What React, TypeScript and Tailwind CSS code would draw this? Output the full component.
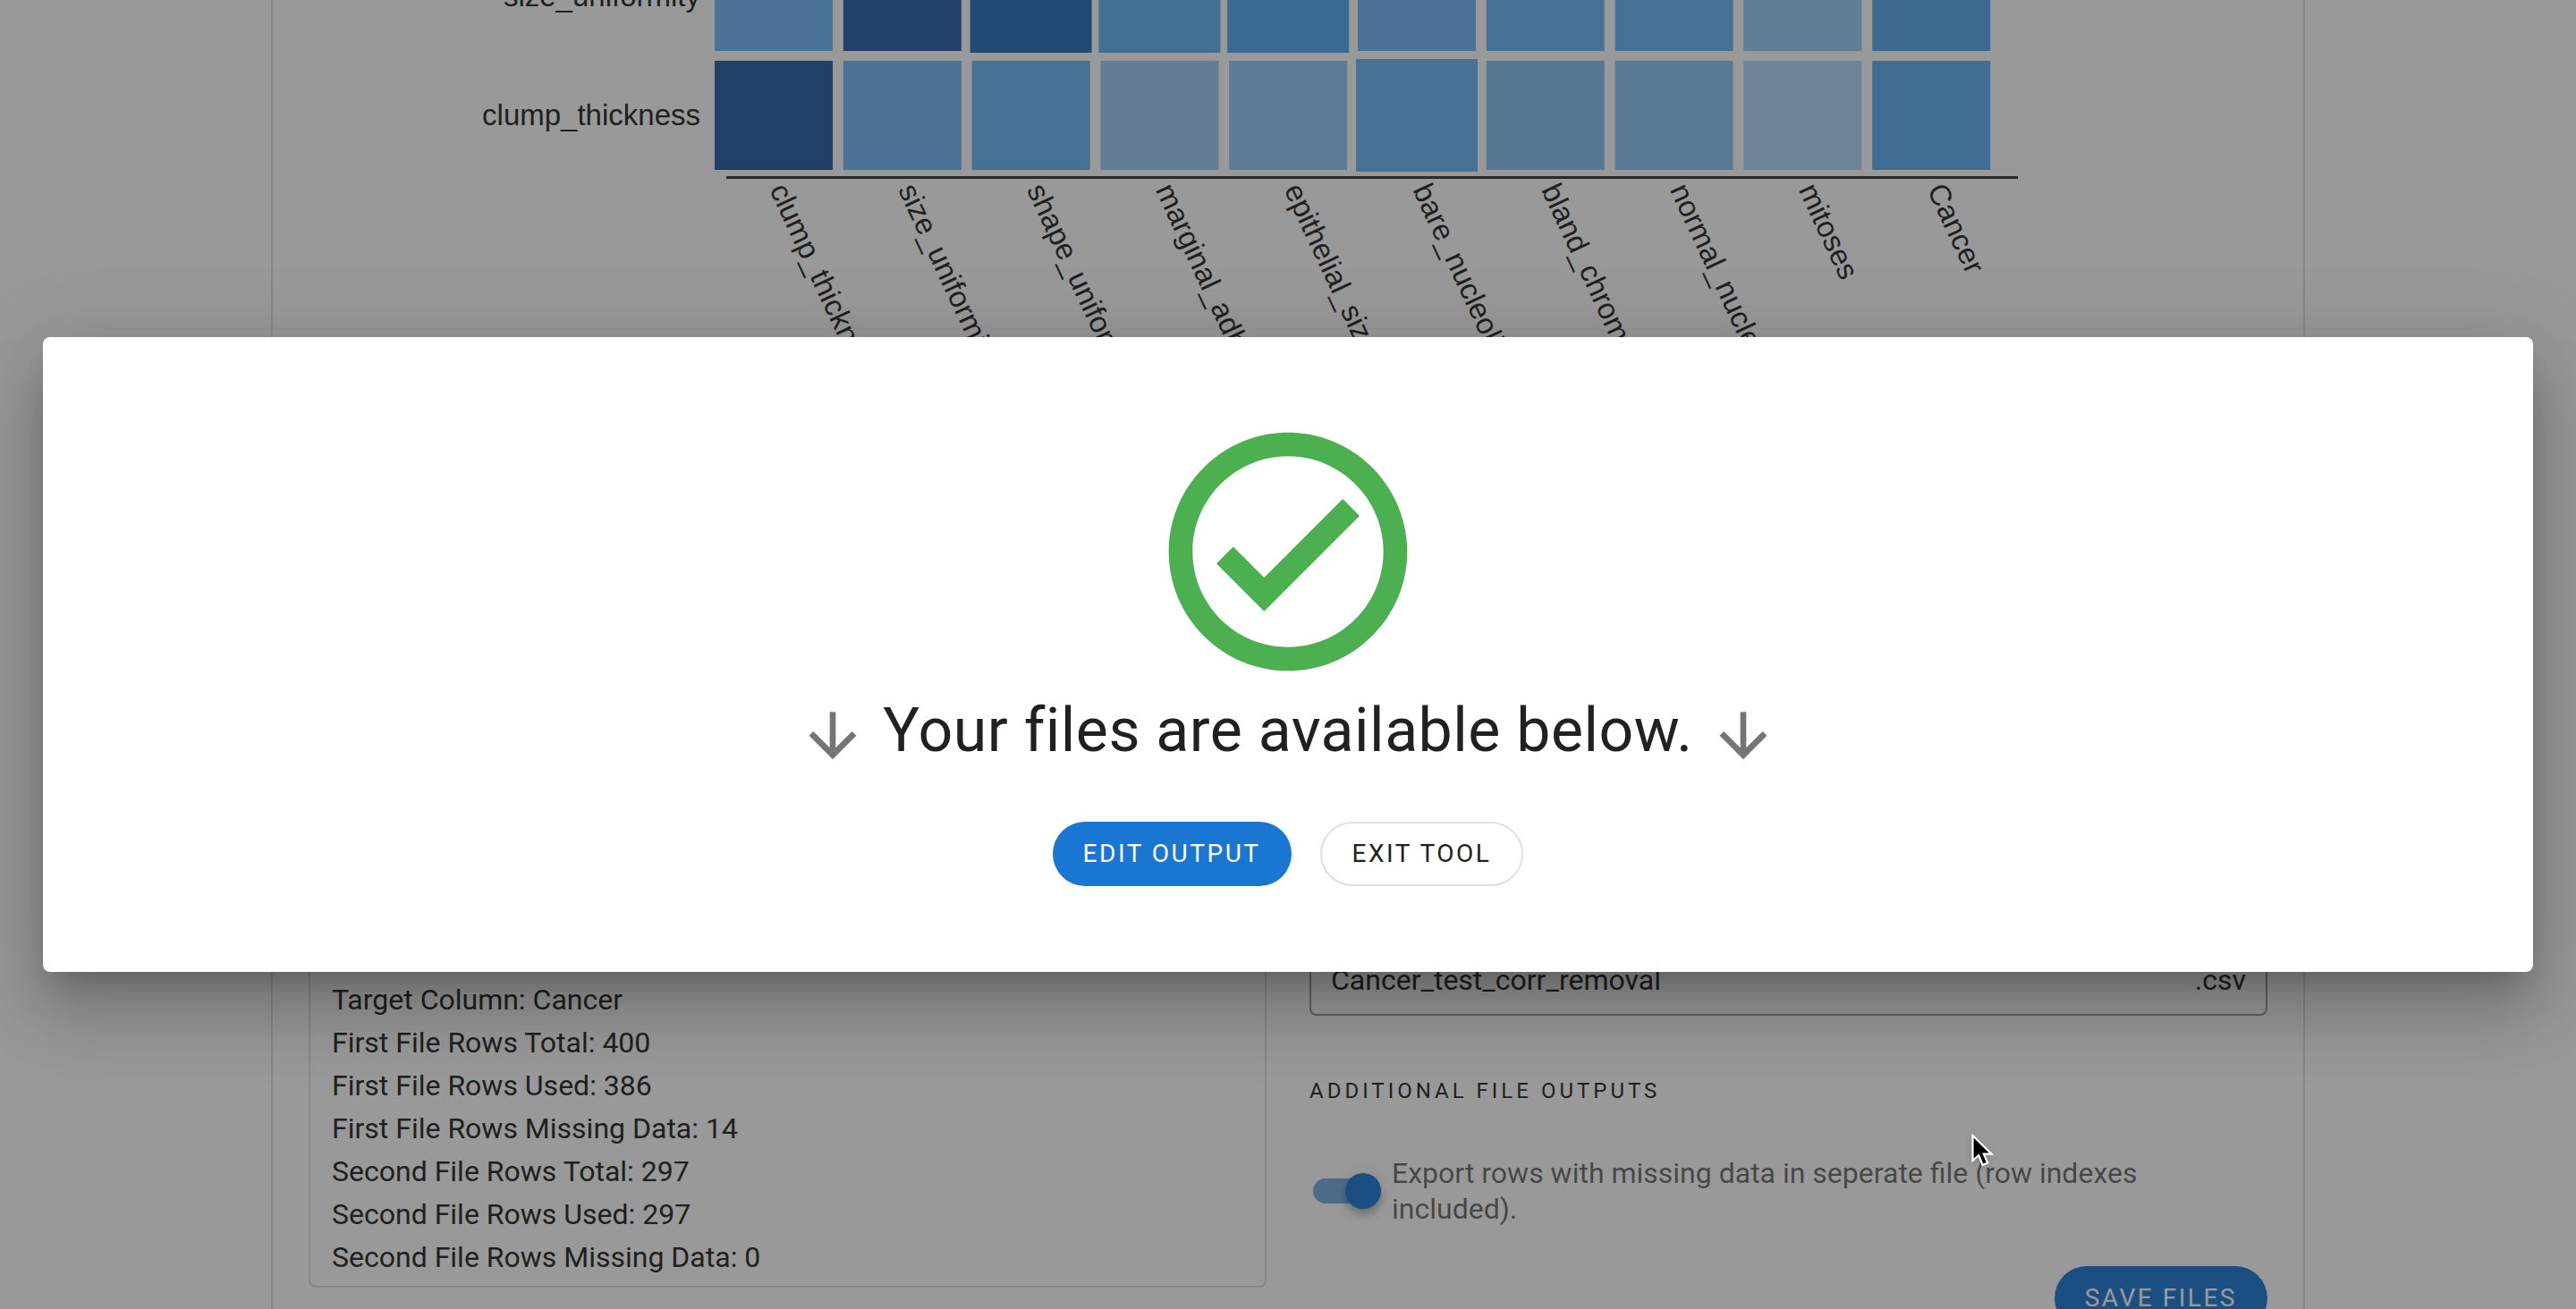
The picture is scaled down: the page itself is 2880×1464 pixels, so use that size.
import React, { useState } from "react";

const FEATURES = [
  "clump_thickness",
  "size_uniformity",
  "shape_uniformity",
  "marginal_adhesion",
  "epithelial_size",
  "bare_nucleoli",
  "bland_chromatin",
  "normal_nucleoli",
  "mitoses",
  "Cancer",
];

type Cell = { fill: string; large?: boolean };
type Row = { label: string; top: number; height: number; cells: Cell[] };

const ROWS: Row[] = [
  {
    label: "size_uniformity",
    top: -65,
    height: 122,
    cells: [
      { fill: "#6db8fa" },
      { fill: "#265baa" },
      { fill: "#226fbd", large: true },
      { fill: "#60b5f6", large: true },
      { fill: "#4ca9f4", large: true },
      { fill: "#6db5fa" },
      { fill: "#66b6f8" },
      { fill: "#66b5f6" },
      { fill: "#98ccfa" },
      { fill: "#55a6ee" },
    ],
  },
  {
    label: "clump_thickness",
    top: 68,
    height: 122,
    cells: [
      { fill: "#265baa" },
      { fill: "#6db7f8" },
      { fill: "#66b6f6" },
      { fill: "#9ccdf6" },
      { fill: "#90c6fa" },
      { fill: "#68b6f8", large: true },
      { fill: "#85c3f8" },
      { fill: "#8ac3f8" },
      { fill: "#aed6fb" },
      { fill: "#59aef6" },
    ],
  },
];

const PLOT_LEFT = 494;
const PLOT_WIDTH = 1438;
const BAND = PLOT_WIDTH / FEATURES.length;
const CELL_WIDTH = 132;

function Heatmap() {
  return (
    <svg
      viewBox="0 0 2270 480"
      className="block w-full shrink-0"
      role="img"
      aria-label="Feature correlation heatmap"
      fontFamily='"Liberation Sans", Arial, sans-serif'
      fontSize="33"
      fill="#212121"
    >
      {ROWS.map((row) => (
        <g key={row.label}>
          <text x={PLOT_LEFT - 16} y={row.top + 72} textAnchor="end">
            {row.label}
          </text>
          {row.cells.map((cell, i) => {
            const grow = cell.large ? 2 : 0;
            return (
              <rect
                key={FEATURES[i]}
                x={PLOT_LEFT + i * BAND - grow}
                y={row.top - grow}
                width={CELL_WIDTH + grow * 2}
                height={row.height + grow * 2}
                fill={cell.fill}
              />
            );
          })}
        </g>
      ))}
      <rect x="507" y="197" width="1444" height="3" fill="#303030" />
      {FEATURES.map((name, i) => (
        <text
          key={name}
          transform={`translate(${PLOT_LEFT + i * BAND + CELL_WIDTH / 2 - 5} 212) rotate(65)`}
        >
          {name}
        </text>
      ))}
    </svg>
  );
}

function ArrowDown() {
  return (
    <svg viewBox="0 0 24 24" className="mt-1.5 size-20 shrink-0" fill="#757575" aria-hidden="true">
      <path d="M11 4H13V16L18.5 10.5L19.92 11.92L12 19.84L4.08 11.92L5.5 10.5L11 16V4Z" />
    </svg>
  );
}

const SUMMARY = [
  "Target Column: Cancer",
  "First File Rows Total: 400",
  "First File Rows Used: 386",
  "First File Rows Missing Data: 14",
  "Second File Rows Total: 297",
  "Second File Rows Used: 297",
  "Second File Rows Missing Data: 0",
];

function OutputForm() {
  const [name, setName] = useState("Cancer_test_corr_removal");
  const [exportMissing, setExportMissing] = useState(true);
  return (
    <form className="flex flex-col">
      <div className="flex h-20 items-center rounded-lg border-2 border-black/40 px-[22px] text-[32px]">
        <input
          aria-label="Output file name"
          value={name}
          onChange={(e) => setName(e.target.value)}
          className="min-w-0 flex-1 bg-transparent outline-none"
        />
        <span>.csv</span>
      </div>
      <h3 className="mt-[52px] text-2xl/[64px] tracking-[4px] uppercase">Additional file outputs</h3>
      <label className="mt-10 flex items-center gap-4 text-[32px]/[40px] text-black/60">
        <span className="relative flex h-10 w-19 shrink-0 items-center pl-1">
          <input
            type="checkbox"
            role="switch"
            checked={exportMissing}
            onChange={(e) => setExportMissing(e.target.checked)}
            className="peer h-7 w-[72px] appearance-none rounded-full bg-black/40 checked:bg-[#1976d2]/60"
          />
          <span className="pointer-events-none absolute top-0 left-0 size-10 rounded-full bg-white shadow-[0_4px_8px_-2px_rgba(0,0,0,0.2),0_8px_10px_0_rgba(0,0,0,0.14),0_2px_20px_0_rgba(0,0,0,0.12)] peer-checked:left-10 peer-checked:bg-[#1976d2]" />
        </span>
        <span>Export rows with missing data in seperate file (row indexes included).</span>
      </label>
      <button
        type="button"
        className="mt-11 h-[72px] self-end rounded-full bg-[#1976d2] px-[34px] text-[28px] tracking-[0.09em] text-white uppercase"
      >
        Save files
      </button>
    </form>
  );
}

function SuccessDialog() {
  return (
    <div
      role="dialog"
      aria-modal="true"
      aria-labelledby="dialog-title"
      className="flex w-full flex-col items-center rounded-lg bg-white pt-20 pb-24 shadow-[0_22px_30px_-14px_rgba(0,0,0,0.2),0_48px_76px_6px_rgba(0,0,0,0.14),0_18px_92px_16px_rgba(0,0,0,0.12)]"
    >
      <svg viewBox="0 0 24 24" className="size-80" fill="#4caf50" aria-hidden="true">
        <path d="M12 2C6.5 2 2 6.5 2 12S6.5 22 12 22 22 17.5 22 12 17.5 2 12 2M12 20C7.59 20 4 16.41 4 12S7.59 4 12 4 20 7.59 20 12 16.41 20 12 20M16.59 7.58L10 14.17L7.41 11.59L6 13L10 17L18 9L16.59 7.58Z" />
      </svg>
      <div className="flex items-start gap-4">
        <ArrowDown />
        <h2 id="dialog-title" className="text-[68px]/[80px] tracking-[0.0073em]">
          Your files are available below.
        </h2>
        <ArrowDown />
      </div>
      <div className="mt-14 flex gap-8">
        <button
          type="button"
          className="h-[72px] rounded-full bg-[#1976d2] px-[34px] text-[28px] tracking-[0.09em] text-white uppercase"
        >
          Edit output
        </button>
        <button
          type="button"
          className="h-[72px] rounded-full border-2 border-black/12 px-[34px] text-[28px] tracking-[0.09em] uppercase"
        >
          Exit tool
        </button>
      </div>
    </div>
  );
}

function Cursor() {
  return (
    <svg
      viewBox="0 0 26 40"
      className="pointer-events-none absolute top-[1266px] left-[2203px] h-10 w-[26px] drop-shadow-md"
      aria-hidden="true"
    >
      <path
        d="M2.5 4V32L9.3 26L13.6 37L19.2 34.6L14.8 24.6H23.6Z"
        fill="#000"
        stroke="#fff"
        strokeWidth="2.2"
      />
    </svg>
  );
}

export default function App() {
  return (
    <div className="relative h-screen overflow-hidden bg-white font-[Roboto,sans-serif] text-[#212121]">
      <main className="mx-[303px] flex h-full flex-col border-x-2 border-black/12">
        <Heatmap />
        <section className="mt-[576px] grid grid-cols-2 items-start gap-12 px-10">
          <ul className="rounded-lg border-2 border-black/12 px-6 pt-9 pb-2 text-[32px]/[48px]">
            {SUMMARY.map((line) => (
              <li key={line}>{line}</li>
            ))}
          </ul>
          <OutputForm />
        </section>
      </main>
      <div className="absolute inset-0 flex items-center bg-[#212121]/46 px-12">
        <SuccessDialog />
      </div>
      <Cursor />
    </div>
  );
}
